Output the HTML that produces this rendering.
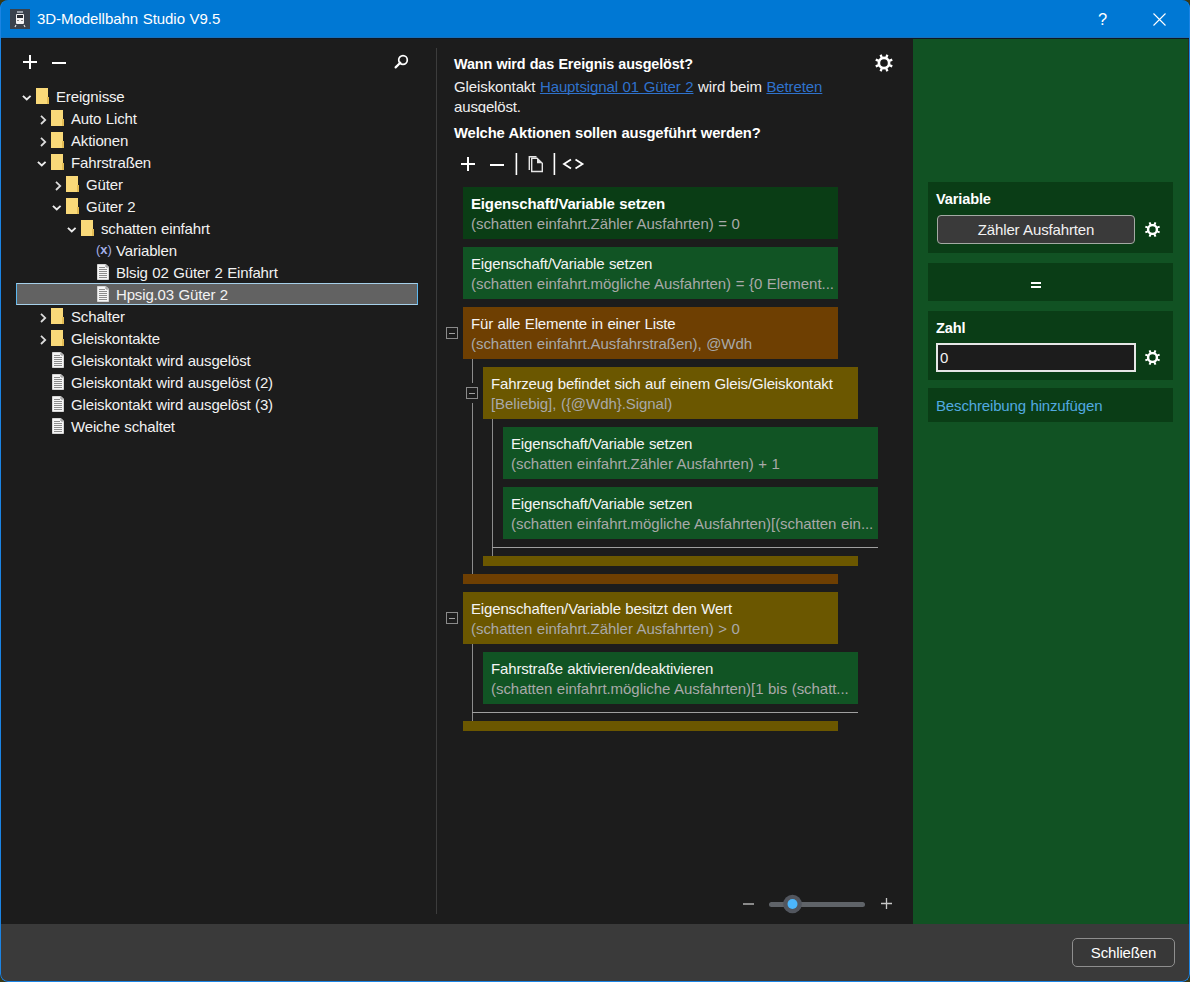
<!DOCTYPE html>
<html><head><meta charset="utf-8"><style>
*{margin:0;padding:0;box-sizing:border-box}
html,body{width:1190px;height:982px;overflow:hidden;background:#3b3a14}
body{font-family:"Liberation Sans",sans-serif;font-size:15px;letter-spacing:-0.15px;word-spacing:0.5px;color:#f2f2f2;position:relative}
.a{position:absolute}
#win{position:absolute;left:0;top:0;width:1190px;height:982px;border-radius:8px;overflow:hidden;background:#1c1c1c}
.t{position:absolute;white-space:nowrap;line-height:20px}
.row{position:absolute;height:22px;line-height:22px;white-space:nowrap}
.fold{position:absolute;width:13px;height:16px}
.fold:before{content:"";position:absolute;left:0;top:0;width:12px;height:16px;background:#f9d979}
.fold:after{content:"";position:absolute;left:11px;top:9px;width:2px;height:7px;background:#e4bd55}
.card{position:absolute;width:375px;height:52px}
.card .h{position:absolute;left:8px;top:7px;line-height:20px;white-space:nowrap;color:#f4f4f4}
.card .s{position:absolute;left:8px;top:27px;line-height:20px;white-space:nowrap;letter-spacing:-0.05px;color:#a9a9a9}
.g{background:#115424}
.gd{background:#0a3d15}
.or{background:#6e3f02}
.ol{background:#6b5700}
.vl{position:absolute;width:1px;background:#8c8c8c}
.hl{position:absolute;height:1px;background:#a0a0a0}
.cb{position:absolute;width:12px;height:12px;border:1px solid #8a8a8a;background:#1c1c1c}
.cb:after{content:"";position:absolute;left:2px;top:5px;width:6px;height:1px;background:#a0a0a0}
.box{position:absolute;left:928px;width:245px;background:#0a3d16}
</style></head><body><div id="win">
<div class="a" style="left:0;top:0;width:1190px;height:38px;background:#0078d4"></div>
<div class="a" style="left:0;top:37px;width:1190px;height:1px;background:#1a6fb8"></div>
<div class="a" style="left:0;top:38px;width:1190px;height:1px;background:#0d1824"></div>
<div class="a" style="left:10px;top:9px;width:20px;height:20px;background:#3a424c">
<svg width="20" height="20" viewBox="0 0 20 20" style="position:absolute;left:0;top:0">
<rect x="7" y="2" width="6" height="2" fill="#9aa0a8"/>
<rect x="6" y="5" width="8" height="10" rx="1" fill="#f4f4f4"/>
<rect x="7" y="6" width="6" height="3" fill="#2a2e34"/>
<rect x="7" y="11" width="2" height="1" fill="#888"/>
<rect x="11" y="11" width="2" height="1" fill="#888"/>
<path d="M6 16 L5 18 M14 16 L15 18" stroke="#ddd" stroke-width="1.2"/>
</svg></div>
<div class="t" style="left:37px;top:9px;color:#fff;letter-spacing:-0.05px">3D-Modellbahn Studio V9.5</div>
<div class="t" style="left:1098px;top:9px;color:#fff;font-size:16.5px">?</div>
<svg class="a" style="left:1153px;top:13px" width="13" height="13"><path d="M0.5 0.5 L12.5 12.5 M12.5 0.5 L0.5 12.5" stroke="#fff" stroke-width="1.1"/></svg>
<svg class="a" style="left:22px;top:54px" width="50" height="16"><path d="M1 8 H15 M8 1 V15" stroke="#fff" stroke-width="2"/><path d="M30 9 H44" stroke="#fff" stroke-width="2"/></svg>
<svg class="a" style="left:392px;top:52px" width="18" height="18"><circle cx="11" cy="8" r="4.3" fill="none" stroke="#fff" stroke-width="1.7"/><path d="M8.3 10.7 L3.6 15.4" stroke="#fff" stroke-width="2.2" stroke-linecap="round"/></svg>
<svg class="a" style="left:22px;top:95px" width="11" height="8"><path d="M0.9 0.9 L4.75 4.5 L8.6 0.9" fill="none" stroke="#ececec" stroke-width="1.9"/></svg>
<div class="fold" style="left:36px;top:88px"></div>
<div class="row" style="left:56px;top:86px">Ereignisse</div>
<svg class="a" style="left:39.5px;top:115px" width="8" height="11"><path d="M1 0.8 L5.2 4.9 L1 9" fill="none" stroke="#dcdcdc" stroke-width="1.8"/></svg>
<div class="fold" style="left:51px;top:110px"></div>
<div class="row" style="left:71px;top:108px">Auto Licht</div>
<svg class="a" style="left:39.5px;top:137px" width="8" height="11"><path d="M1 0.8 L5.2 4.9 L1 9" fill="none" stroke="#dcdcdc" stroke-width="1.8"/></svg>
<div class="fold" style="left:51px;top:132px"></div>
<div class="row" style="left:71px;top:130px">Aktionen</div>
<svg class="a" style="left:37px;top:161px" width="11" height="8"><path d="M0.9 0.9 L4.75 4.5 L8.6 0.9" fill="none" stroke="#ececec" stroke-width="1.9"/></svg>
<div class="fold" style="left:51px;top:154px"></div>
<div class="row" style="left:71px;top:152px">Fahrstraßen</div>
<svg class="a" style="left:54.5px;top:181px" width="8" height="11"><path d="M1 0.8 L5.2 4.9 L1 9" fill="none" stroke="#dcdcdc" stroke-width="1.8"/></svg>
<div class="fold" style="left:66px;top:176px"></div>
<div class="row" style="left:86px;top:174px">Güter</div>
<svg class="a" style="left:52px;top:205px" width="11" height="8"><path d="M0.9 0.9 L4.75 4.5 L8.6 0.9" fill="none" stroke="#ececec" stroke-width="1.9"/></svg>
<div class="fold" style="left:66px;top:198px"></div>
<div class="row" style="left:86px;top:196px">Güter 2</div>
<svg class="a" style="left:67px;top:227px" width="11" height="8"><path d="M0.9 0.9 L4.75 4.5 L8.6 0.9" fill="none" stroke="#ececec" stroke-width="1.9"/></svg>
<div class="fold" style="left:81px;top:220px"></div>
<div class="row" style="left:101px;top:218px">schatten einfahrt</div>
<div class="row" style="left:96px;top:239px;color:#a4b0e8;font-size:13px;letter-spacing:0">(<b>x</b>)</div>
<div class="row" style="left:116px;top:240px">Variablen</div>
<svg class="a" style="left:97px;top:264px" width="12" height="16" viewBox="0 0 12 16"><path d="M0.5 0.5 H9 L11.5 3 V15.5 H0.5 Z" fill="#f6f6f6" stroke="#d6d6d6" stroke-width="1"/><path d="M9 0.5 V3 H11.5" fill="none" stroke="#8a8a8a" stroke-width="1"/><path d="M2 3.5 H8" stroke="#8c8c8c" stroke-width="1"/><path d="M2 5.5 H10" stroke="#8c8c8c" stroke-width="1"/><path d="M2 7.5 H10" stroke="#8c8c8c" stroke-width="1"/><path d="M2 9.5 H10" stroke="#8c8c8c" stroke-width="1"/><path d="M2 11.5 H10" stroke="#8c8c8c" stroke-width="1"/><path d="M2 13.5 H10" stroke="#8c8c8c" stroke-width="1"/></svg>
<div class="row" style="left:116px;top:262px">Blsig 02 Güter 2 Einfahrt</div>
<div class="a" style="left:16px;top:283px;width:402px;height:22px;background:#626262;border:1px solid #a6d0ea;border-left-color:#5cb8f0;border-right-color:#5cb8f0"></div>
<svg class="a" style="left:97px;top:286px" width="12" height="16" viewBox="0 0 12 16"><path d="M0.5 0.5 H9 L11.5 3 V15.5 H0.5 Z" fill="#f6f6f6" stroke="#d6d6d6" stroke-width="1"/><path d="M9 0.5 V3 H11.5" fill="none" stroke="#8a8a8a" stroke-width="1"/><path d="M2 3.5 H8" stroke="#8c8c8c" stroke-width="1"/><path d="M2 5.5 H10" stroke="#8c8c8c" stroke-width="1"/><path d="M2 7.5 H10" stroke="#8c8c8c" stroke-width="1"/><path d="M2 9.5 H10" stroke="#8c8c8c" stroke-width="1"/><path d="M2 11.5 H10" stroke="#8c8c8c" stroke-width="1"/><path d="M2 13.5 H10" stroke="#8c8c8c" stroke-width="1"/></svg>
<div class="row" style="left:116px;top:284px">Hpsig.03 Güter 2</div>
<svg class="a" style="left:39.5px;top:313px" width="8" height="11"><path d="M1 0.8 L5.2 4.9 L1 9" fill="none" stroke="#dcdcdc" stroke-width="1.8"/></svg>
<div class="fold" style="left:51px;top:308px"></div>
<div class="row" style="left:71px;top:306px">Schalter</div>
<svg class="a" style="left:39.5px;top:335px" width="8" height="11"><path d="M1 0.8 L5.2 4.9 L1 9" fill="none" stroke="#dcdcdc" stroke-width="1.8"/></svg>
<div class="fold" style="left:51px;top:330px"></div>
<div class="row" style="left:71px;top:328px">Gleiskontakte</div>
<svg class="a" style="left:52px;top:352px" width="12" height="16" viewBox="0 0 12 16"><path d="M0.5 0.5 H9 L11.5 3 V15.5 H0.5 Z" fill="#f6f6f6" stroke="#d6d6d6" stroke-width="1"/><path d="M9 0.5 V3 H11.5" fill="none" stroke="#8a8a8a" stroke-width="1"/><path d="M2 3.5 H8" stroke="#8c8c8c" stroke-width="1"/><path d="M2 5.5 H10" stroke="#8c8c8c" stroke-width="1"/><path d="M2 7.5 H10" stroke="#8c8c8c" stroke-width="1"/><path d="M2 9.5 H10" stroke="#8c8c8c" stroke-width="1"/><path d="M2 11.5 H10" stroke="#8c8c8c" stroke-width="1"/><path d="M2 13.5 H10" stroke="#8c8c8c" stroke-width="1"/></svg>
<div class="row" style="left:71px;top:350px">Gleiskontakt wird ausgelöst</div>
<svg class="a" style="left:52px;top:374px" width="12" height="16" viewBox="0 0 12 16"><path d="M0.5 0.5 H9 L11.5 3 V15.5 H0.5 Z" fill="#f6f6f6" stroke="#d6d6d6" stroke-width="1"/><path d="M9 0.5 V3 H11.5" fill="none" stroke="#8a8a8a" stroke-width="1"/><path d="M2 3.5 H8" stroke="#8c8c8c" stroke-width="1"/><path d="M2 5.5 H10" stroke="#8c8c8c" stroke-width="1"/><path d="M2 7.5 H10" stroke="#8c8c8c" stroke-width="1"/><path d="M2 9.5 H10" stroke="#8c8c8c" stroke-width="1"/><path d="M2 11.5 H10" stroke="#8c8c8c" stroke-width="1"/><path d="M2 13.5 H10" stroke="#8c8c8c" stroke-width="1"/></svg>
<div class="row" style="left:71px;top:372px">Gleiskontakt wird ausgelöst (2)</div>
<svg class="a" style="left:52px;top:396px" width="12" height="16" viewBox="0 0 12 16"><path d="M0.5 0.5 H9 L11.5 3 V15.5 H0.5 Z" fill="#f6f6f6" stroke="#d6d6d6" stroke-width="1"/><path d="M9 0.5 V3 H11.5" fill="none" stroke="#8a8a8a" stroke-width="1"/><path d="M2 3.5 H8" stroke="#8c8c8c" stroke-width="1"/><path d="M2 5.5 H10" stroke="#8c8c8c" stroke-width="1"/><path d="M2 7.5 H10" stroke="#8c8c8c" stroke-width="1"/><path d="M2 9.5 H10" stroke="#8c8c8c" stroke-width="1"/><path d="M2 11.5 H10" stroke="#8c8c8c" stroke-width="1"/><path d="M2 13.5 H10" stroke="#8c8c8c" stroke-width="1"/></svg>
<div class="row" style="left:71px;top:394px">Gleiskontakt wird ausgelöst (3)</div>
<svg class="a" style="left:52px;top:418px" width="12" height="16" viewBox="0 0 12 16"><path d="M0.5 0.5 H9 L11.5 3 V15.5 H0.5 Z" fill="#f6f6f6" stroke="#d6d6d6" stroke-width="1"/><path d="M9 0.5 V3 H11.5" fill="none" stroke="#8a8a8a" stroke-width="1"/><path d="M2 3.5 H8" stroke="#8c8c8c" stroke-width="1"/><path d="M2 5.5 H10" stroke="#8c8c8c" stroke-width="1"/><path d="M2 7.5 H10" stroke="#8c8c8c" stroke-width="1"/><path d="M2 9.5 H10" stroke="#8c8c8c" stroke-width="1"/><path d="M2 11.5 H10" stroke="#8c8c8c" stroke-width="1"/><path d="M2 13.5 H10" stroke="#8c8c8c" stroke-width="1"/></svg>
<div class="row" style="left:71px;top:416px">Weiche schaltet</div>
<div class="a" style="left:436px;top:48px;width:1px;height:866px;background:#3c3c3c"></div>
<div class="t" style="left:454px;top:54px;font-weight:bold;font-size:14.4px;color:#fff">Wann wird das Ereignis ausgelöst?</div>
<div class="a" style="left:454px;top:77px;width:420px;height:36px;overflow:hidden"><div class="t" style="left:0;top:0;color:#f0f0f0;letter-spacing:-0.1px">Gleiskontakt <span style="color:#2f72cc;text-decoration:underline;text-decoration-skip-ink:none">Hauptsignal 01 Güter 2</span> wird beim <span style="color:#2f72cc;text-decoration:underline;text-decoration-skip-ink:none">Betreten</span></div><div class="t" style="left:0;top:20px;color:#f0f0f0">ausgelöst.</div></div>
<div class="t" style="left:454px;top:123px;font-weight:bold;font-size:14.8px;color:#fff">Welche Aktionen sollen ausgeführt werden?</div>
<svg class="a" style="left:455px;top:150px" width="140" height="28">
<path d="M6 14 H20 M13 7 V21" stroke="#fff" stroke-width="2"/>
<path d="M35 15 H49" stroke="#fff" stroke-width="2"/>
<path d="M61.4 3 V25 M99.4 3 V25" stroke="#fff" stroke-width="1.6"/>
<path d="M74.3 20 V6.8 H81.5" fill="none" stroke="#e6e6e6" stroke-width="1.4"/>
<path d="M76.7 8.2 H82 L87.3 13.3 V21.5 H76.7 Z" fill="#1c1c1c" stroke="#e6e6e6" stroke-width="1.4"/>
<path d="M82 8.5 V13.3 H87 Z" fill="#e6e6e6"/>
<path d="M116 9.5 L109 14 L116 18.5 M120.5 9.5 L127.5 14 L120.5 18.5" fill="none" stroke="#fff" stroke-width="1.8"/>
</svg>
<div class="vl" style="left:472px;top:359px;height:215px"></div>
<div class="vl" style="left:492px;top:419px;height:137px"></div>
<div class="vl" style="left:472px;top:644px;height:77px"></div>
<div class="hl" style="left:492px;top:547px;width:386px"></div>
<div class="hl" style="left:472px;top:712px;width:386px"></div>
<div class="card gd" style="left:463px;top:187px"><div class="h" style="font-weight:bold;color:#fff">Eigenschaft/Variable setzen</div><div class="s">(schatten einfahrt.Zähler Ausfahrten) = 0</div></div>
<div class="card g" style="left:463px;top:247px"><div class="h">Eigenschaft/Variable setzen</div><div class="s">(schatten einfahrt.mögliche Ausfahrten) = {0 Element...</div></div>
<div class="card or" style="left:463px;top:307px"><div class="h">Für alle Elemente in einer Liste</div><div class="s">(schatten einfahrt.Ausfahrstraßen), @Wdh</div></div>
<div class="card ol" style="left:483px;top:367px"><div class="h">Fahrzeug befindet sich auf einem Gleis/Gleiskontakt</div><div class="s">[Beliebig], ({@Wdh}.Signal)</div></div>
<div class="card g" style="left:503px;top:427px"><div class="h">Eigenschaft/Variable setzen</div><div class="s">(schatten einfahrt.Zähler Ausfahrten) + 1</div></div>
<div class="card g" style="left:503px;top:487px"><div class="h">Eigenschaft/Variable setzen</div><div class="s">(schatten einfahrt.mögliche Ausfahrten)[(schatten ein...</div></div>
<div class="card ol" style="left:463px;top:592px"><div class="h">Eigenschaften/Variable besitzt den Wert</div><div class="s">(schatten einfahrt.Zähler Ausfahrten) &gt; 0</div></div>
<div class="card g" style="left:483px;top:652px"><div class="h">Fahrstraße aktivieren/deaktivieren</div><div class="s">(schatten einfahrt.mögliche Ausfahrten)[1 bis (schatt...</div></div>
<div class="a" style="left:469px;top:383px;width:7px;height:20px;background:#1c1c1c"></div>
<div class="cb" style="left:446px;top:327px"></div>
<div class="cb" style="left:466px;top:387px"></div>
<div class="cb" style="left:446px;top:612px"></div>
<div class="a ol" style="left:483px;top:556px;width:375px;height:10px"></div>
<div class="a or" style="left:463px;top:574px;width:375px;height:10px"></div>
<div class="a ol" style="left:463px;top:721px;width:375px;height:10px"></div>
<svg class="a" style="left:735px;top:890px" width="165" height="28">
<path d="M8 14 H19" stroke="#c8c8c8" stroke-width="1.3"/>
<path d="M36.5 14.5 H127.5" stroke="#5f6368" stroke-width="5" stroke-linecap="round"/>
<circle cx="57.5" cy="14" r="9.3" fill="#52565e"/>
<circle cx="57.5" cy="14" r="5" fill="#4cb6fb"/>
<path d="M146 13.5 H157 M151.5 8 V19" stroke="#c8c8c8" stroke-width="1.3"/>
</svg>
<div class="a" style="left:913px;top:39px;width:275px;height:885px;background:#115223"></div>
<div class="a" style="left:1188px;top:39px;width:1px;height:885px;background:#2b2b2b"></div>
<div class="box" style="top:182px;height:71px"></div>
<div class="box" style="top:263px;height:38px"></div>
<div class="box" style="top:311px;height:69px"></div>
<div class="box" style="top:388px;height:34px"></div>
<div class="t" style="left:936px;top:189px;font-weight:bold;font-size:14.6px;color:#fff">Variable</div>
<div class="a" style="left:937px;top:215px;width:198px;height:29px;background:#3a3a3a;border:1px solid #a4aaa4;border-radius:4px"></div>
<div class="t" style="left:937px;top:220px;width:198px;text-align:center;color:#f2f2f2">Zähler Ausfahrten</div>
<div class="a" style="left:1031px;top:282px;width:10px;height:2px;background:#fff"></div><div class="a" style="left:1031px;top:286px;width:10px;height:2px;background:#fff"></div>
<div class="t" style="left:936px;top:318px;font-weight:bold;font-size:14.6px;color:#fff">Zahl</div>
<div class="a" style="left:936px;top:343px;width:200px;height:29px;background:#1c1c1c;border:2px solid #e6e6e6"></div>
<div class="t" style="left:940px;top:348px;color:#f2f2f2">0</div>
<div class="t" style="left:936px;top:396px;color:#52aae0">Beschreibung hinzufügen</div>
<svg class="a" style="left:0;top:0" width="1190" height="982"><path fill-rule="evenodd" fill="#fff" d="M890.40 63.00 L890.27 64.30 L892.68 65.37 L891.82 67.46 L889.35 66.51 L888.53 67.53 L887.51 68.35 L888.46 70.82 L886.37 71.68 L885.30 69.27 L884.00 69.40 L882.70 69.27 L881.63 71.68 L879.54 70.82 L880.49 68.35 L879.47 67.53 L878.65 66.51 L876.18 67.46 L875.32 65.37 L877.73 64.30 L877.60 63.00 L877.73 61.70 L875.32 60.63 L876.18 58.54 L878.65 59.49 L879.47 58.47 L880.49 57.65 L879.54 55.18 L881.63 54.32 L882.70 56.73 L884.00 56.60 L885.30 56.73 L886.37 54.32 L888.46 55.18 L887.51 57.65 L888.53 58.47 L889.35 59.49 L891.82 58.54 L892.68 60.63 L890.27 61.70 Z M880.20 63.00 a3.80 3.80 0 1 0 7.60 0 a3.80 3.80 0 1 0 -7.60 0 Z"/><path fill-rule="evenodd" fill="#fff" d="M1158.10 229.50 L1157.98 230.64 L1160.02 231.56 L1159.28 233.36 L1157.18 232.57 L1156.46 233.46 L1155.57 234.18 L1156.36 236.28 L1154.56 237.02 L1153.64 234.98 L1152.50 235.10 L1151.36 234.98 L1150.44 237.02 L1148.64 236.28 L1149.43 234.18 L1148.54 233.46 L1147.82 232.57 L1145.72 233.36 L1144.98 231.56 L1147.02 230.64 L1146.90 229.50 L1147.02 228.36 L1144.98 227.44 L1145.72 225.64 L1147.82 226.43 L1148.54 225.54 L1149.43 224.82 L1148.64 222.72 L1150.44 221.98 L1151.36 224.02 L1152.50 223.90 L1153.64 224.02 L1154.56 221.98 L1156.36 222.72 L1155.57 224.82 L1156.46 225.54 L1157.18 226.43 L1159.28 225.64 L1160.02 227.44 L1157.98 228.36 Z M1149.30 229.50 a3.20 3.20 0 1 0 6.40 0 a3.20 3.20 0 1 0 -6.40 0 Z"/><path fill-rule="evenodd" fill="#fff" d="M1158.10 357.50 L1157.98 358.64 L1160.02 359.56 L1159.28 361.36 L1157.18 360.57 L1156.46 361.46 L1155.57 362.18 L1156.36 364.28 L1154.56 365.02 L1153.64 362.98 L1152.50 363.10 L1151.36 362.98 L1150.44 365.02 L1148.64 364.28 L1149.43 362.18 L1148.54 361.46 L1147.82 360.57 L1145.72 361.36 L1144.98 359.56 L1147.02 358.64 L1146.90 357.50 L1147.02 356.36 L1144.98 355.44 L1145.72 353.64 L1147.82 354.43 L1148.54 353.54 L1149.43 352.82 L1148.64 350.72 L1150.44 349.98 L1151.36 352.02 L1152.50 351.90 L1153.64 352.02 L1154.56 349.98 L1156.36 350.72 L1155.57 352.82 L1156.46 353.54 L1157.18 354.43 L1159.28 353.64 L1160.02 355.44 L1157.98 356.36 Z M1149.30 357.50 a3.20 3.20 0 1 0 6.40 0 a3.20 3.20 0 1 0 -6.40 0 Z"/></svg>
<div class="a" style="left:0;top:924px;width:1190px;height:58px;background:#3a3a3a"></div>
<div class="a" style="left:1072px;top:938px;width:103px;height:29px;border:1px solid #8e8e8e;border-radius:5px;background:#383838"></div>
<div class="t" style="left:1072px;top:943px;width:103px;text-align:center;color:#fff">Schließen</div>
<div class="a" style="left:0;top:0;width:1190px;height:982px;border:1px solid #1b84e4;border-top:0;border-radius:8px;pointer-events:none"></div>
</div></body></html>
